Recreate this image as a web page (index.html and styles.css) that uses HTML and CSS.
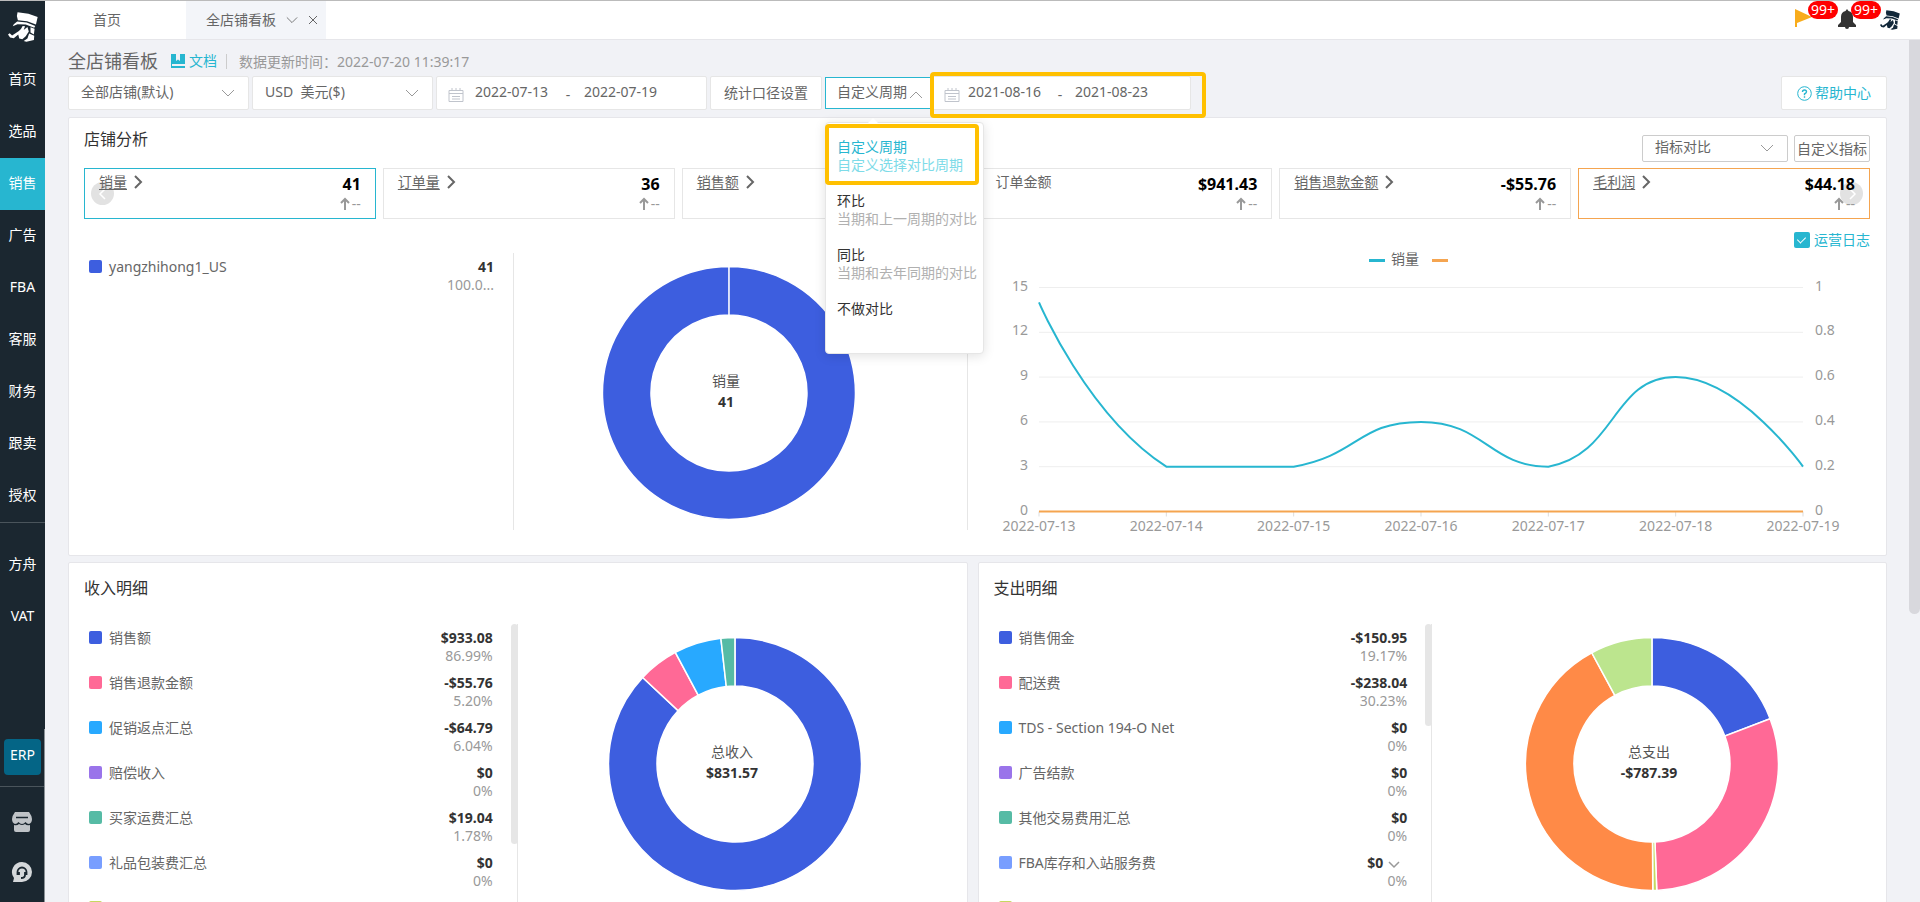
FILE: index.html
```
<!DOCTYPE html>
<html lang="zh-CN">
<head>
    <meta charset="UTF-8">
    <meta name="viewport" content="width=device-width, initial-scale=1.0">
    <title>全店铺看板</title>
    <link rel="stylesheet" href="styles.css">
</head>
<body>
    <!-- 图标 -->
    <svg class="defs" width="0" height="0">
        <symbol id="i-logo" viewBox="0 0 88 88">
            <path d="M28 1 60 5 87 15 82 37 56 27 29 24 26 12z"/>
            <path d="M27 28 55 31 80 41 77 46 52 37 28 36 14 42 17 36z"/>
            <path d="M0 66 5 62 12 69 32 56 38 50 43 41 50 42 46 53 57 44 61 57 52 71 42 80 33 78 30 66 17 77 6 75z"/>
            <path d="M66 45 78 49 76 66 66 60z"/>
            <path d="M62 63 77 70 76 82 54 87 46 85 57 78z"/>
        </symbol>
        <symbol id="i-down" viewBox="0 0 14 14"><path d="M1 4l6 6 6-6" fill="none" stroke="currentColor"/></symbol>
        <symbol id="i-right" viewBox="0 0 14 14"><path d="M4 1l6 6-6 6" fill="none" stroke="currentColor" stroke-width="2"/></symbol>
        <symbol id="i-date" viewBox="0 0 16 16"><path d="M1 3.500h14v11H1zM1 6.500h14M4 1v3M8 1v3M12 1v3M4 9.500h8M4 12h8" fill="none" stroke="currentColor"/></symbol>
        <symbol id="i-up" viewBox="0 0 10 14"><path d="M5 13V2M1 6l4-4 4 4" fill="none" stroke="currentColor" stroke-width="2"/></symbol>
    </svg>

    <nav class="side">
        <a class="logo" href="#" aria-label="首页"><svg width="30" height="30"><use href="#i-logo"/></svg></a>
        <a href="#">首页</a>
        <a href="#">选品</a>
        <a href="#" class="active">销售</a>
        <a href="#">广告</a>
        <a href="#">FBA</a>
        <a href="#">客服</a>
        <a href="#">财务</a>
        <a href="#">跟卖</a>
        <a href="#">授权</a>
        <div class="more">
            <a href="#">方舟</a>
            <a href="#">VAT</a>
        </div>
        <div class="bottom">
            <a class="erp" href="#">ERP</a>
            <div class="tools">
                <button aria-label="店铺"><svg width="22" height="22" viewBox="0 0 22 22"><path d="M4 1h14q3 4 3 7 0 4-3 5-2 0-3.500-2-1.500 2-3.500 2t-3.500-2Q6 13 4 13 1 12 1 8q0-3 3-7z" fill="#bfc3c7"/><path d="M5 6.500h12" stroke="#1b2730" stroke-width="1.500"/><path d="M3 14q3 1 5-1 3 2 6 0 2 2 5 1v5q0 2-2 2H5q-2 0-2-2z" fill="#bfc3c7"/></svg></button>
                <button aria-label="客服"><svg width="22" height="22" viewBox="0 0 22 22"><path d="M11 1a10 10 0 1 1 0 20H2l1-4A10 10 0 0 1 11 1z" fill="#d5d8da"/><path d="M6.500 14v-3a4.500 4.500 0 0 1 9 0v3M8 14v-3M14 11v3q0 3-4 3" fill="none" stroke="#1b2730" stroke-width="1.800"/></svg></button>
            </div>
        </div>
    </nav>

    <div class="page">
        <header class="top">
            <a class="tab" href="#">首页</a>
            <div class="tab active">
                <span>全店铺看板</span>
                <svg width="12" height="12"><use href="#i-down"/></svg>
                <svg width="10" height="10" viewBox="0 0 10 10"><path d="M1 1l8 8M9 1l-8 8" stroke="currentColor"/></svg>
            </div>
            <div class="notice">
                <button aria-label="公告"><svg width="17" height="18" viewBox="0 0 17 18"><path d="M0 0l17 8-15 6v4H0z" fill="#f8ac1c"/></svg><span class="badge">99+</span></button>
                <button aria-label="消息"><svg width="18" height="20" viewBox="0 0 18 20"><path d="M9 0l1.500 2Q15 3 15 8v5l3 3v2h-7q0 2-2 2t-2-2H0v-2l3-3V8q0-5 4.500-6z" fill="#333"/></svg><span class="badge">99+</span></button>
                <button aria-label="账号"><svg class="user" width="20" height="22"><use href="#i-logo"/></svg></button>
            </div>
        </header>

        <main class="main">
            <div class="title">
                <h1>全店铺看板</h1>
                <a href="#" class="doc"><svg width="14" height="14" viewBox="0 0 14 14"><path d="M0 0h5v7l2-1.500L9 7V0h5v10H1v2h13v2H0z" fill="currentColor"/></svg>文档</a>
                <span class="time">数据更新时间：2022-07-20 11:39:17</span>
            </div>

            <div class="filter">
                <div class="select shop">
                    <select aria-label="店铺"><option>全部店铺(默认)</option></select>
                    <svg width="14" height="14"><use href="#i-down"/></svg>
                </div>
                <div class="select shop">
                    <select aria-label="币种"><option>USD&nbsp; 美元($)</option></select>
                    <svg width="14" height="14"><use href="#i-down"/></svg>
                </div>
                <div class="date">
                    <svg width="16" height="16"><use href="#i-date"/></svg>
                    <input type="text" value="2022-07-13" aria-label="开始日期"><i>-</i><input type="text" value="2022-07-19" aria-label="结束日期">
                </div>
                <button class="btn">统计口径设置</button>
                <div class="cycle">
                    <button class="cycleBtn">自定义周期<svg width="14" height="14" viewBox="0 0 14 14"><path d="M1 10l6-6 6 6" fill="none" stroke="currentColor"/></svg></button>
                    <ul class="menu">
                        <li class="active"><p>自定义周期</p><p class="des">自定义选择对比周期</p></li>
                        <li><p>环比</p><p class="des">当期和上一周期的对比</p></li>
                        <li><p>同比</p><p class="des">当期和去年同期的对比</p></li>
                        <li><p>不做对比</p></li>
                    </ul>
                </div>
                <div class="date mark">
                    <svg width="16" height="16"><use href="#i-date"/></svg>
                    <input type="text" value="2021-08-16" aria-label="对比开始日期"><i>-</i><input type="text" value="2021-08-23" aria-label="对比结束日期">
                </div>
                <a href="#" class="help"><svg width="15" height="15" viewBox="0 0 15 15"><circle cx="7.500" cy="7.500" r="6.800" fill="none" stroke="currentColor"/><path d="M5.500 6q0-2 2-2t2 1.800Q9.500 7 7.500 8v1.200M7.500 10.200v1.500" fill="none" stroke="currentColor" stroke-width="1.400"/></svg>帮助中心</a>
            </div>

            <section class="panel shopPanel">
                <div class="head">
                    <h2>店铺分析</h2>
                    <div class="select compare">
                        <select aria-label="指标"><option>指标对比</option></select>
                        <svg width="14" height="14"><use href="#i-down"/></svg>
                    </div>
                    <button class="custom">自定义指标</button>
                </div>
                <div class="cards">
                    <button class="arrow prev" aria-label="上一页"><svg width="12" height="12" viewBox="0 0 12 12"><path d="M8 1L3 6l5 5" fill="none" stroke="#fff" stroke-width="1.500"/></svg></button>
                    <button class="arrow next" aria-label="下一页"><svg width="12" height="12" viewBox="0 0 12 12"><path d="M4 1l5 5-5 5" fill="none" stroke="#fff" stroke-width="1.500"/></svg></button>
                </div>
                <div class="log"><label><input type="checkbox" checked>运营日志</label></div>
                <div class="body">
                    <div class="half">
                        <ul class="list" id="shopList"></ul>
                        <div class="donut" id="shopDonut"></div>
                    </div>
                    <div class="line" id="line"></div>
                </div>
            </section>

            <div class="row">
                <section class="panel">
                    <h2>收入明细</h2>
                    <div class="detail">
                        <ul class="list" id="inList"></ul>
                        <span class="bar"></span>
                        <div class="donut" id="inDonut"></div>
                    </div>
                </section>
                <section class="panel">
                    <h2>支出明细</h2>
                    <div class="detail">
                        <ul class="list" id="outList"></ul>
                        <span class="bar short"></span>
                        <div class="donut" id="outDonut"></div>
                    </div>
                </section>
            </div>
        </main>
        <span class="pageBar"></span>
    </div>

    <script src="main.js"></script>
</body>
</html>
```

FILE: styles.css
```
* {
    margin: 0;
    padding: 0;
    box-sizing: border-box;
    list-style: none;
}
body {
    display: flex;
    height: 100vh;
    overflow: hidden;
    border-top: 1px solid #bbb;
    background-color: #f1f2f6;
    color: #666;
    font: 14px/18px "Noto Sans", "Noto Sans CJK SC", sans-serif;
}
a {
    color: inherit;
    text-decoration: none;
}
button, input, select {
    font: inherit;
    color: inherit;
    border: none;
    outline: none;
    background: none;
}
button {
    cursor: pointer;
}
h1, h2 {
    font-weight: normal;
}
svg {
    flex: none;
}
.defs {
    position: absolute;
}

/* 侧边栏 */
.side {
    flex: none;
    display: flex;
    flex-direction: column;
    width: 45px;
    background-color: #1b2730;
    color: #fff;
}
.side a {
    height: 52px;
    line-height: 50px;
    text-align: center;
}
.side .logo {
    height: 53px;
    padding-top: 11px;
    line-height: 0;
    fill: #fff;
}
.side .active {
    background-color: #27b6d0;
}
.side .more {
    display: flex;
    flex-direction: column;
    padding-top: 16px;
    border-top: 1px solid #4a545b;
}
.side .bottom {
    display: flex;
    flex-direction: column;
    margin-top: auto;
    padding-top: 10px;
    border-right: 1px solid #8a9196;
}
.side .erp {
    height: 36px;
    margin: 0 3px 0 4px;
    line-height: 32px;
    border-radius: 4px;
    background-color: #046586;
}
.side .tools {
    display: flex;
    flex-direction: column;
    align-items: center;
    gap: 28px;
    margin-top: 11px;
    padding: 24px 0 19px;
    border-top: 1px solid #4a545b;
}
.side .tools button {
    height: 22px;
}

/* 顶部标签 */
.page {
    position: relative;
    flex: 1;
    display: flex;
    flex-direction: column;
    min-width: 0;
}
.top {
    flex: none;
    display: flex;
    height: 39px;
    border-bottom: 1px solid #e6e6ea;
    background-color: #fff;
}
.top .tab {
    display: flex;
    align-items: center;
    width: 141px;
    padding-left: 48px;
}
.top .tab.active {
    gap: 10px;
    width: 140px;
    padding-left: 20px;
    background-color: #f3f5f9;
}
.top .notice {
    display: flex;
    gap: 26px;
    margin-left: auto;
    padding: 8px 20px 0 0;
}
.notice button {
    position: relative;
    height: 22px;
}
.notice .badge {
    position: absolute;
    left: 13px;
    top: -8px;
    width: 30px;
    border-radius: 9px;
    background-color: #f00;
    color: #fff;
}
.notice .user {
    margin-left: -2px;
    fill: #12283a;
}
.pageBar {
    position: absolute;
    right: 0;
    top: 39px;
    width: 11px;
    height: 574px;
    border-radius: 0 0 6px 6px;
    background-color: #d8d8dd;
}

/* 标题和筛选 */
.main {
    flex: 1;
    min-height: 0;
    overflow: hidden;
    padding: 6px 33px 0 23px;
}
.title {
    display: flex;
    align-items: center;
    height: 30px;
}
.title h1 {
    font-size: 18px;
}
.title .doc {
    display: flex;
    align-items: center;
    gap: 4px;
    margin: 0 9px 0 13px;
    color: #27b6d0;
}
.title .time {
    padding-left: 12px;
    line-height: 15px;
    border-left: 1px solid #ccc;
    color: #999;
}
.filter {
    display: flex;
    align-items: center;
    gap: 3px;
    height: 34px;
    margin-bottom: 7px;
}
.select {
    position: relative;
    border: 1px solid #e6e6e6;
    border-radius: 2px;
    background-color: #fff;
}
.select select {
    width: 100%;
    height: 100%;
    padding: 0 12px 3px;
    appearance: none;
}
.select svg {
    position: absolute;
    right: 13px;
    top: 9px;
    color: #999;
    pointer-events: none;
}
.select.shop {
    width: 181px;
    height: 34px;
}
.date {
    display: flex;
    align-items: center;
    width: 271px;
    height: 34px;
    padding-left: 11px;
    border: 1px solid #e6e6e6;
    border-radius: 2px;
    background-color: #fff;
}
.date svg {
    margin-right: 11px;
    margin-top: 3px;
    color: #c0c4cc;
}
.date input {
    width: 77px;
    padding-bottom: 2px;
}
.date i {
    width: 32px;
    padding-top: 4px;
    text-align: center;
    font-style: normal;
}
.date.mark {
    position: relative;
    width: 259px;
}
.date.mark svg {
    margin-right: 8px;
}
.date.mark i {
    width: 30px;
}
.date.mark::after {
    content: '';
    position: absolute;
    inset: -5px -16px -9px -3px;
    border: 4px solid #ffc000;
    border-radius: 4px;
    pointer-events: none;
}
.btn {
    width: 112px;
    height: 34px;
    border: 1px solid #e6e6e6;
    border-radius: 2px;
    background-color: #fff;
}
.cycle {
    position: relative;
    z-index: 2;
    width: 104px;
}
.cycleBtn {
    display: flex;
    align-items: center;
    gap: 2px;
    width: 106px;
    height: 32px;
    padding: 0 0 2px 11px;
    border: 1px solid #27b6d0;
    background-color: #fff;
}
.cycleBtn svg {
    margin-top: 5px;
    color: #999;
}
.date.mark {
    z-index: 3;
}
.menu {
    position: absolute;
    left: 0;
    top: 45px;
    width: 159px;
    height: 232px;
    padding: 15px 0 0 11px;
    border: 1px solid #e6e6e6;
    border-radius: 4px;
    background-color: #fff;
    box-shadow: 0 2px 12px rgba(0, 0, 0, .12);
    white-space: nowrap;
    color: #333;
}
.menu::before {
    content: '';
    position: absolute;
    left: 41px;
    top: -5px;
    border: 6px solid transparent;
    border-top: none;
    border-bottom-color: #fff;
}
.menu li {
    margin-bottom: 18px;
}
.menu .des {
    color: #b0b0b0;
}
.menu .active {
    color: #27b6d0;
}
.menu .active .des {
    color: #7ddbe8;
}
.menu .active::after {
    content: '';
    position: absolute;
    left: -1px;
    top: 1px;
    width: 146px;
    height: 53px;
    border: 4px solid #ffc000;
    border-radius: 4px;
}
.help {
    display: flex;
    align-items: center;
    justify-content: center;
    gap: 3px;
    width: 106px;
    height: 34px;
    margin-left: auto;
    border: 1px solid #e6e6e6;
    border-radius: 2px;
    background-color: #fff;
    color: #27b6d0;
}

/* 面板 */
.panel {
    padding: 14px 15px 0;
    border: 1px solid #e6e6ea;
    border-radius: 2px;
    background-color: #fff;
}
.panel h2 {
    font-size: 16px;
    line-height: 22px;
    color: #333;
}
.shopPanel {
    padding: 10px 16px 25px 15px;
    margin-bottom: 6px;
}
.shopPanel .head {
    display: flex;
    height: 40px;
}
.shopPanel .compare {
    width: 146px;
    height: 27px;
    margin: 7px 6px 0 auto;
    border-color: #ccc;
}
.shopPanel .compare svg {
    top: 5px;
}
.custom {
    width: 76px;
    height: 27px;
    margin-top: 7px;
    border: 1px solid #ccc;
    border-radius: 2px;
    white-space: nowrap;
}
.cards {
    position: relative;
    display: grid;
    grid-template-columns: repeat(6, 1fr);
    gap: 7px;
}
.card {
    display: flex;
    justify-content: space-between;
    height: 51px;
    padding: 4px 14px 0;
    border: 1px solid #e6e6e6;
}
.card.blue {
    border-color: #27b6d0;
}
.card.orange {
    border-color: #f5a550;
}
.card .name {
    position: relative;
    z-index: 1;
    display: flex;
    align-items: center;
    gap: 4px;
    height: 18px;
}
.card u {
    text-underline-offset: 2px;
}
.card .num {
    position: relative;
    z-index: 1;
    text-align: right;
    color: #999;
}
.card b {
    display: block;
    font-size: 16px;
    line-height: 22px;
    color: #000;
}
.card .num svg {
    vertical-align: -2px;
    margin-right: 2px;
}
.arrow {
    position: absolute;
    top: 14px;
    width: 23px;
    height: 23px;
    border-radius: 50%;
    background-color: #e2e2e2;
    line-height: 0;
}
.arrow.prev {
    left: 7px;
}
.arrow.next {
    right: 7px;
}
.log {
    display: flex;
    justify-content: flex-end;
    height: 34px;
    padding-top: 12px;
    color: #27b6d0;
}
.log label {
    display: flex;
    align-items: center;
    gap: 4px;
    height: 18px;
}
.log input {
    position: relative;
    width: 16px;
    height: 16px;
    border-radius: 2px;
    background-color: #27b6d0;
    appearance: none;
}
.log input:checked::after {
    content: '';
    position: absolute;
    left: 5px;
    top: 3px;
    width: 4px;
    height: 7px;
    border: solid #fff;
    border-width: 0 1px 1px 0;
    transform: rotate(45deg);
}
.body {
    display: flex;
    height: 277px;
}
.half {
    display: flex;
    width: calc(50% - 9px);
    padding-right: 23px;
    border-right: 1px solid #e6e6e6;
}
.line {
    flex: 1;
    min-width: 0;
}
.line svg {
    display: block;
    overflow: visible;
}
.row {
    display: flex;
}
.row .panel {
    width: 50%;
    height: 400px;
}
.row .panel:first-child {
    width: calc(50% - 10px);
    margin-right: 10px;
}
.detail {
    position: relative;
    display: flex;
    height: 340px;
    margin-top: 25px;
}
.detail .bar {
    position: absolute;
    left: calc(50% - 7px);
    width: 7px;
    height: 220px;
    border-radius: 4px;
    background-color: #e6e6e6;
}
.detail .bar.short {
    height: 102px;
}

/* 列表 */
.list {
    width: 50%;
    padding: 5px 19px 0 5px;
    border-right: 1px solid #e6e6e6;
}
.detail .list {
    padding-right: 24px;
}
.list li {
    display: flex;
    height: 45px;
}
.list .dot {
    width: 13px;
    height: 13px;
    margin: 2px 7px 0 0;
    border-radius: 2px;
}
.list .val {
    margin-left: auto;
    text-align: right;
    color: #999;
}
.list b {
    color: #333;
}
.list .val svg {
    margin: 0 6px 0 4px;
    vertical-align: -3px;
}
.donut {
    width: 50%;
    padding-top: 12px;
    text-align: center;
}
```

FILE: main.js
```
var cardArr = [
    {name: '销量', num: '41', link: true, cls: 'blue'},
    {name: '订单量', num: '36', link: true},
    {name: '销售额', num: '$933.08', link: true},
    {name: '订单金额', num: '$941.43'},
    {name: '销售退款金额', num: '-$55.76', link: true},
    {name: '毛利润', num: '$44.18', link: true, cls: 'orange'}
];
var shopArr = [
    {name: 'yangzhihong1_US', num: '41', per: '100.0...', color: '#3d5edf'}
];
var inArr = [
    {name: '销售额', num: '$933.08', per: '86.99%', color: '#3d5edf'},
    {name: '销售退款金额', num: '-$55.76', per: '5.20%', color: '#ff6996'},
    {name: '促销返点汇总', num: '-$64.79', per: '6.04%', color: '#28a9ff'},
    {name: '赔偿收入', num: '$0', per: '0%', color: '#9a74ea'},
    {name: '买家运费汇总', num: '$19.04', per: '1.78%', color: '#56bba5'},
    {name: '礼品包装费汇总', num: '$0', per: '0%', color: '#789eff'},
    {name: '', num: '$0', per: '0%', color: '#c6d860'}
];
var outArr = [
    {name: '销售佣金', num: '-$150.95', per: '19.17%', color: '#3d5edf'},
    {name: '配送费', num: '-$238.04', per: '30.23%', color: '#ff6996'},
    {name: 'TDS - Section 194-O Net', num: '$0', per: '0%', color: '#28a9ff'},
    {name: '广告结款', num: '$0', per: '0%', color: '#9a74ea'},
    {name: '其他交易费用汇总', num: '$0', per: '0%', color: '#56bba5'},
    {name: 'FBA库存和入站服务费', num: '$0', per: '0%', color: '#789eff', more: true},
    {name: '', num: '$0', per: '0%', color: '#c6d860', more: true}
];

function $(id) {
    return document.getElementById(id);
}

//指标卡片
function renderCards(data) {
    var htmlStr = '';
    data.forEach(function (ele) {
        var name = ele.link ? '<u>' + ele.name + '</u><svg width="14" height="14"><use href="#i-right"/></svg>' : ele.name;
        htmlStr += '<div class="card ' + (ele.cls || '') + '"><div class="name">' + name + '</div>' +
            '<div class="num"><b>' + ele.num + '</b><svg width="10" height="14"><use href="#i-up"/></svg>--</div></div>';
    });
    document.querySelector('.cards').insertAdjacentHTML('beforeend', htmlStr);
}

//明细列表
function renderList(id, data) {
    var htmlStr = '';
    data.forEach(function (ele) {
        htmlStr += '<li><span class="dot" style="background-color:' + ele.color + '"></span>' + ele.name +
            '<div class="val"><b>' + ele.num + '</b>' +
            (ele.more ? '<svg width="14" height="14" viewBox="0 0 14 14"><path d="M2 5l5 5 5-5" fill="none" stroke="#999" stroke-width="1.5"/></svg>' : '') +
            '<p>' + ele.per + '</p></div></li>';
    });
    $(id).innerHTML = htmlStr;
}

//环形图
function renderDonut(id, name, num, data) {
    var R = 126.5, r = 78, c = 128, sum = 0, acc = 0, s = '';
    function pt(rad, t) {
        var a = t * Math.PI * 2;
        return (c + rad * Math.sin(a)).toFixed(3) + ' ' + (c - rad * Math.cos(a)).toFixed(3);
    }
    data.forEach(function (d) { sum += d[0]; });
    data.forEach(function (d) {
        var t0 = acc / sum;
        acc += d[0];
        //整圆的起点和终点不能重合
        var t1 = Math.min(acc / sum, 0.9999);
        var big = t1 - t0 > 0.5 ? 1 : 0;
        s += '<path fill="' + d[1] + '" stroke="#fff" stroke-width="1.5" d="M' + pt(R, t0) +
            'A' + R + ' ' + R + ' 0 ' + big + ' 1 ' + pt(R, t1) + 'L' + pt(r, t1) +
            'A' + r + ' ' + r + ' 0 ' + big + ' 0 ' + pt(r, t0) + 'z"/>';
    });
    $(id).innerHTML = '<svg width="256" height="256" text-anchor="middle">' + s +
        '<text x="125" y="121" fill="#555">' + name + '</text>' +
        '<text x="125" y="142" fill="#333" font-weight="bold">' + num + '</text></svg>';
}

//折线图
function renderLine() {
    var el = $('line'), W = el.clientWidth;
    var left = 71, right = W - 67, top = 34.5, step = 44.8, base = top + step * 5;
    var vals = [14, 3, 3, 6, 3, 9, 3];
    var s = '', i;
    for (i = 0; i < 6; i++) {
        var y = top + step * i;
        s += '<path d="M' + left + ' ' + y + 'H' + right + '" stroke="#eee"/>';
        s += '<text x="60" y="' + (y + 3) + '" text-anchor="end">' + (15 - i * 3) + '</text>';
        s += '<text x="' + (right + 12) + '" y="' + (y + 3) + '">' + (10 - i * 2) / 10 + '</text>';
    }
    var p = vals.map(function (v, i) {
        var x = left + (right - left) / 6 * i;
        s += '<path d="M' + x + ' ' + base + 'v5" stroke="#ddd"/>';
        s += '<text x="' + x + '" y="' + (base + 19) + '" text-anchor="middle">2022-07-' + (13 + i) + '</text>';
        return [x, base - v * step / 3];
    });
    function dist(a, b) {
        return Math.hypot(a[0] - b[0], a[1] - b[1]);
    }
    function clamp(v, a, b) {
        return Math.max(Math.min(a, b), Math.min(Math.max(a, b), v));
    }
    var d = 'M' + p[0], cp = p[0];
    for (i = 1; i < p.length; i++) {
        var c1 = cp, c2 = p[i];
        if (i < p.length - 1) {
            var a = p[i - 1], b = p[i], n = p[i + 1];
            var k = dist(a, b) / (dist(a, b) + dist(b, n));
            var vx = (n[0] - a[0]) / 2, vy = (n[1] - a[1]) / 2;
            c2 = [b[0] - vx * k, clamp(b[1] - vy * k, a[1], b[1])];
            cp = [b[0] + vx * (1 - k), clamp(b[1] + vy * (1 - k), b[1], n[1])];
        }
        d += 'C' + c1 + ' ' + c2 + ' ' + p[i];
    }
    s += '<path d="' + d + '" fill="none" stroke="#27b6d0" stroke-width="2"/>';
    s += '<path d="M' + left + ' ' + base + 'H' + right + '" stroke="#f5a550" stroke-width="2"/>';
    //图例
    var m = W / 2 - 50;
    s += '<path d="M' + m + ' 7.5h16" stroke="#27b6d0" stroke-width="3"/>';
    s += '<text x="' + (m + 22) + '" y="11" style="fill:#666">销量</text>';
    s += '<path d="M' + (m + 63) + ' 7.5h16" stroke="#f5a550" stroke-width="3"/>';
    el.innerHTML = '<svg width="' + W + '" height="290" fill="#999">' + s + '</svg>';
}

renderCards(cardArr);
renderList('shopList', shopArr);
renderList('inList', inArr);
renderList('outList', outArr);
renderDonut('shopDonut', '销量', '41', [[100, '#3d5edf']]);
renderDonut('inDonut', '总收入', '$831.57', [[86.99, '#3d5edf'], [5.2, '#ff6996'], [6.04, '#28a9ff'], [1.78, '#56bba5']]);
renderDonut('outDonut', '总支出', '-$787.39', [[19.17, '#3d5edf'], [30.23, '#ff6996'], [0.5, '#c6d860'], [42.2, '#ff8a47'], [7.9, '#bce58e']]);
renderLine();
window.onresize = renderLine;
```
